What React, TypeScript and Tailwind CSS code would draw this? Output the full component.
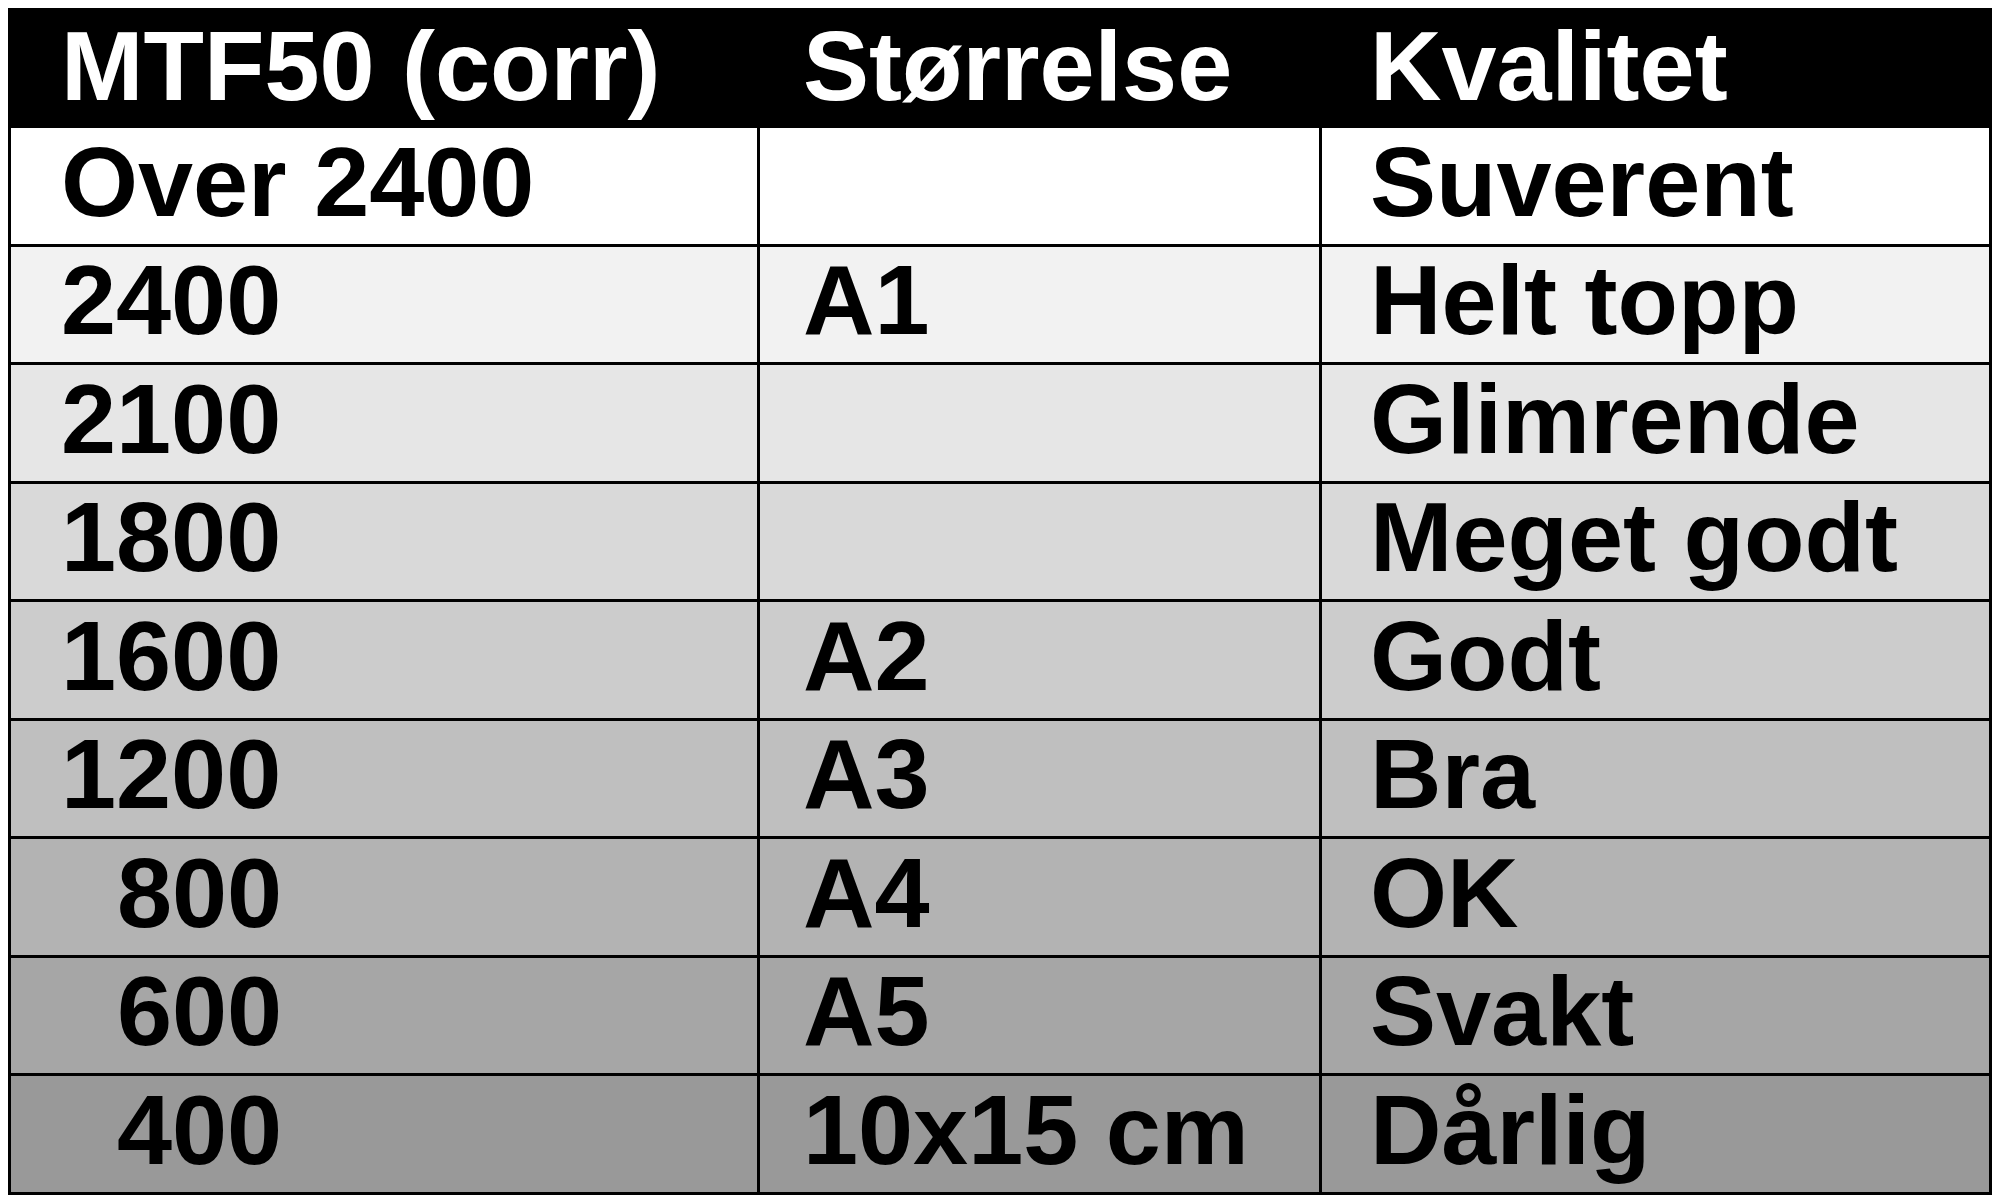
const rows = [
  { mtf: 'Over 2400', size: '', quality: 'Suverent', bg: 'bg-white', h: 'h-[119px]' },
  { mtf: '2400', size: 'A1', quality: 'Helt topp', bg: 'bg-[#f2f2f2]', h: 'h-[118px]' },
  { mtf: '2100', size: '', quality: 'Glimrende', bg: 'bg-[#e6e6e6]', h: 'h-[119px]' },
  { mtf: '1800', size: '', quality: 'Meget godt', bg: 'bg-[#d9d9d9]', h: 'h-[118px]' },
  { mtf: '1600', size: 'A2', quality: 'Godt', bg: 'bg-[#cccccc]', h: 'h-[119px]' },
  { mtf: '1200', size: 'A3', quality: 'Bra', bg: 'bg-[#bfbfbf]', h: 'h-[118px]' },
  { mtf: '800', size: 'A4', quality: 'OK', bg: 'bg-[#b3b3b3]', h: 'h-[119px]', indent: true },
  { mtf: '600', size: 'A5', quality: 'Svakt', bg: 'bg-[#a6a6a6]', h: 'h-[118px]', indent: true },
  { mtf: '400', size: '10x15 cm', quality: 'Dårlig', bg: 'bg-[#999999]', h: 'h-[119px]', indent: true },
];

export default function App() {
  return (
    <div
      className="h-[1202px] w-[2000px] bg-white pl-[8px] pt-[8px] text-[99px] font-bold leading-none text-black"
      style={{ fontFamily: '"Liberation Sans", Arial, sans-serif' }}
    >
      <div className="w-[1984px] border-[3px] border-black">
        <div className="flex h-[114px] items-center bg-black pb-[6px] text-white">
          <div className="w-[749px] pl-[50px]">MTF50 (corr)</div>
          <div className="w-[562px] pl-[43px]">Størrelse</div>
          <div className="flex-1 pl-[48px]">Kvalitet</div>
        </div>
        {rows.map((row) => (
          <div key={row.quality} className={`flex ${row.h} border-t-[3px] border-black ${row.bg}`}>
            <div className="flex w-[749px] items-center border-r-[3px] border-black pb-[10px] pl-[50px]">
              <span className={row.indent ? 'ml-[56px]' : ''}>{row.mtf}</span>
            </div>
            <div className="flex w-[562px] items-center border-r-[3px] border-black pb-[10px] pl-[43px]">
              {row.size}
            </div>
            <div className="flex flex-1 items-center pb-[10px] pl-[48px]">{row.quality}</div>
          </div>
        ))}
      </div>
    </div>
  );
}
